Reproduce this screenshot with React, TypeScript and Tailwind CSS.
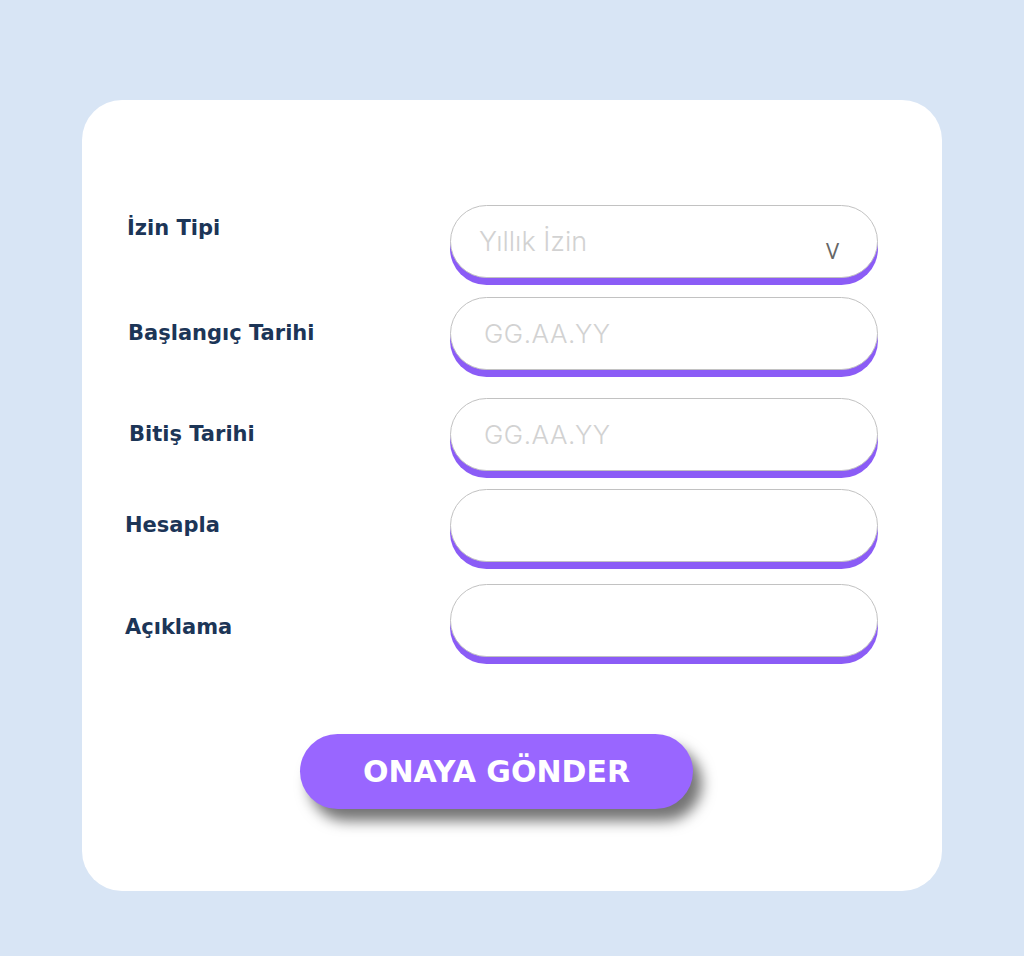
import { useState } from "react";

type Row = {
  label: string;
  labelClass: string;
  placeholder?: string;
  rowClass: string;
};

const rows: Row[] = [
  { label: "Başlangıç Tarihi", labelClass: "mt-[21px] pl-[46px]", placeholder: "GG.AA.YY", rowClass: "mt-[19px]" },
  { label: "Bitiş Tarihi", labelClass: "mt-[21px] pl-[47px]", placeholder: "GG.AA.YY", rowClass: "mt-[28px]" },
  { label: "Hesapla", labelClass: "mt-[21px] pl-[43px]", rowClass: "mt-[18px]" },
  { label: "Açıklama", labelClass: "mt-[28px] pl-[43px]", rowClass: "mt-[22px]" },
];

const fieldClass =
  "h-[73px] w-[428px] rounded-full border border-[#c2c2c2] bg-white shadow-[0_7px_0_#8b5cf6] outline-none";

const labelClass =
  "w-[368px] font-['DejaVu_Sans',sans-serif] text-[21px] font-bold leading-[30px] text-[#1c3557]";

const App = () => {
  const [values, setValues] = useState<string[]>(["", "", "", ""]);

  const update = (i: number, v: string) =>
    setValues((prev) => prev.map((x, j) => (j === i ? v : x)));

  return (
    <div className="min-h-[956px] w-full bg-[#d8e5f5] pt-[100px] font-['Inter',sans-serif]">
      <div className="ml-[82px] h-[791px] w-[860px] rounded-[40px] bg-white pt-[105px]">
        <div className="flex items-start">
          <div className={`${labelClass} mt-[8px] pl-[45px]`}>İzin Tipi</div>
          <div className={`${fieldClass} flex items-start justify-between`}>
            <span className="mt-[16px] pl-[28px] text-[27px] font-light leading-[40px] text-[#d2d2d2]">
              Yıllık İzin
            </span>
            <span className="mt-[28px] pr-[38px] font-['Open_Sans',sans-serif] text-[22px] leading-[32px] text-[#666]">
              V
            </span>
          </div>
        </div>

        {rows.map((row, i) => (
          <div key={row.label} className={`flex items-start ${row.rowClass}`}>
            <div className={`${labelClass} ${row.labelClass}`}>{row.label}</div>
            <input
              value={values[i]}
              onChange={(e) => update(i, e.target.value)}
              placeholder={row.placeholder}
              className={`${fieldClass} pl-[33px] text-[26px] font-light tracking-[0.5px] text-[#444] placeholder:text-[#d2d2d2]`}
            />
          </div>
        ))}

        <button className="ml-[218px] mt-[77px] h-[75px] w-[393px] rounded-full bg-[#9966ff] font-['DejaVu_Sans',sans-serif] text-[30px] font-bold text-white shadow-[9px_12px_14px_rgba(0,0,0,0.55)]">
          ONAYA GÖNDER
        </button>
      </div>
    </div>
  );
};

export default App;
